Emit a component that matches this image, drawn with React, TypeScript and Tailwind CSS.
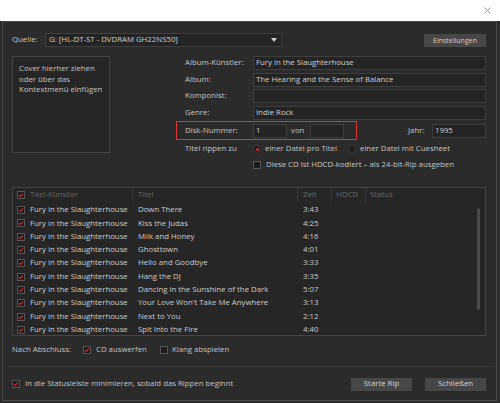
import React from 'react';

const tracks = [
  { title: 'Down There', time: '3:43' },
  { title: 'Kiss the Judas', time: '4:25' },
  { title: 'Milk and Honey', time: '4:16' },
  { title: 'Ghosttown', time: '4:01' },
  { title: 'Hello and Goodbye', time: '3:33' },
  { title: 'Hang the DJ', time: '3:35' },
  { title: 'Dancing in the Sunshine of the Dark', time: '5:07' },
  { title: "Your Love Won't Take Me Anywhere", time: '3:13' },
  { title: 'Next to You', time: '2:12' },
  { title: 'Spit Into the Fire', time: '4:40' },
];

function Check({ on = true }: { on?: boolean }) {
  return (
    <span className="w-[8px] h-[8px] shrink-0 border border-[#555] bg-[#1c1c1c] flex items-center justify-center">
      {on && (
        <svg width="8" height="8" viewBox="0 0 8 8" className="block">
          <path d="M1.3 4.1 L3.1 5.9 L6.6 1.9" fill="none" stroke="#e0262b" strokeWidth="1.4" />
        </svg>
      )}
    </span>
  );
}

function Radio({ on = false }: { on?: boolean }) {
  return (
    <span className="w-[8px] h-[8px] shrink-0 rounded-full bg-[#1a1a1a] border border-[#3a3a3a] flex items-center justify-center">
      {on && <span className="w-[3px] h-[3px] rounded-full bg-[#e0262b]" />}
    </span>
  );
}

function Field({ value = '', className = '' }: { value?: string; className?: string }) {
  return (
    <div className={`h-[14px] bg-[#242424] border border-[#3e3e3e] pl-[2px] flex items-center text-[#cfcfcf] whitespace-nowrap overflow-hidden ${className}`}>
      {value}
    </div>
  );
}

function Button({ label }: { label: string }) {
  return (
    <div className="w-[61px] h-[13px] bg-[#474747] flex items-center justify-center text-[#d6d6d6]">
      {label}
    </div>
  );
}

export default function App() {
  return (
    <div
      className="w-[500px] h-[403px] flex flex-col bg-[#2b2b2b] text-[7.8px] leading-none text-[#c4c4c4] overflow-hidden"
      style={{ fontFamily: '"Open Sans", "Noto Sans", sans-serif' }}
    >
      {/* title strip */}
      <div className="h-[21px] bg-white flex justify-end items-center pr-[9px] shrink-0">
        <svg width="7" height="7" viewBox="0 0 7 7">
          <path d="M0.5 0.5 L6.5 6.5 M6.5 0.5 L0.5 6.5" stroke="#8a8a8a" strokeWidth="0.9" />
        </svg>
      </div>

      <div className="flex-1 pl-[2px] pr-[3px] pb-[2px]">
        <div className="h-full border border-[#4b4b4b] pl-[9px] pr-[10px] flex flex-col">
          {/* source row */}
          <div className="mt-[10px] h-[16px] flex items-center">
            <span className="w-[33px]">Quelle:</span>
            <div className="w-[237px] h-[14px] bg-[#242424] border border-[#3e3e3e] pl-[3px] pr-[4px] flex items-center justify-between text-[#cfcfcf]">
              <span>G: [HL-DT-ST - DVDRAM GH22NS50]</span>
              <svg width="6" height="4" viewBox="0 0 6 4">
                <path d="M0 0 H6 L3 4 Z" fill="#d0d0d0" />
              </svg>
            </div>
            <div className="ml-auto">
              <div className="w-[62px] h-[13px] bg-[#474747] flex items-center justify-center text-[#d0d0d0] text-[7px]">
                Einstellungen
              </div>
            </div>
          </div>

          {/* cover + metadata */}
          <div className="mt-[8px] h-[116px] flex">
            <div className="w-[98px] h-[97px] border border-[#444] bg-[#262626] pl-[6px] pt-[6px] leading-[10.7px] text-[#c4c4c4]">
              Cover hierher ziehen
              <br />
              oder über das
              <br />
              Kontextmenü einfügen
            </div>

            <div className="ml-[66px] flex-1 flex flex-col">
              <div className="flex flex-col gap-[2.5px]">
                {[
                  ['Album-Künstler:', 'Fury in the Slaughterhouse'],
                  ['Album:', 'The Hearing and the Sense of Balance'],
                  ['Komponist:', ''],
                  ['Genre:', 'Indie Rock'],
                ].map(([label, value]) => (
                  <div key={label} className="flex items-center">
                    <span className="w-[77px] pl-[9px]">{label}</span>
                    <Field value={value} className="flex-1" />
                  </div>
                ))}
              </div>

              <div className="mt-[1.5px] flex items-center">
                <div className="w-[181px] h-[19px] border border-[#dc3a30] flex items-center">
                  <span className="w-[76px] pl-[8px]">Disk-Nummer:</span>
                  <Field value="1" className="w-[34px]" />
                  <span className="w-[23px] pl-[4px]">von</span>
                  <Field className="w-[34px]" />
                </div>
                <span className="ml-auto w-[24px]">Jahr:</span>
                <Field value="1995" className="w-[54px]" />
              </div>

              <div className="mt-[2.5px] h-[13px] flex items-center">
                <span className="w-[77px] pl-[9px]">Titel rippen zu</span>
                <div className="w-[95px] flex items-center gap-[4px]">
                  <Radio on />
                  <span>einer Datei pro Titel</span>
                </div>
                <div className="flex items-center gap-[4px]">
                  <Radio />
                  <span>einer Datei mit Cuesheet</span>
                </div>
              </div>

              <div className="mt-[3px] h-[13px] flex items-center pl-[77px] gap-[5px]">
                <Check on={false} />
                <span>Diese CD ist HDCD-kodiert – als 24-bit-Rip ausgeben</span>
              </div>
            </div>
          </div>

          {/* track list */}
          <div className="relative mt-[15px] h-[149px] border border-[#454545] bg-[#262626]">
            <div className="h-[13px] flex items-center text-[#666]">
              <div className="w-[17px] pl-[4px]">
                <Check />
              </div>
              <div className="w-[103px] h-full flex items-center border-r border-[#3a3a3a]">Titel-Künstler</div>
              <div className="w-[165px] h-full flex items-center pl-[5px] border-r border-[#3a3a3a]">Titel</div>
              <div className="w-[34px] h-full flex items-center pl-[5px] border-r border-[#3a3a3a]">Zeit</div>
              <div className="w-[34px] h-full flex items-center pl-[4px] border-r border-[#3a3a3a]">HDCD</div>
              <div className="pl-[4px]">Status</div>
            </div>
            <div className="pt-[2.5px]">
              {tracks.map((t) => (
                <div key={t.title} className="h-[13.3px] flex items-center text-[#cdcdcd] whitespace-nowrap">
                  <div className="w-[17px] pl-[4px]">
                    <Check />
                  </div>
                  <div className="w-[103px]">Fury in the Slaughterhouse</div>
                  <div className="w-[165px] pl-[5px]">{t.title}</div>
                  <div className="pl-[5px]">{t.time}</div>
                </div>
              ))}
            </div>
            <div className="absolute right-[5px] top-[20px] w-[3px] h-[102px] rounded-full bg-[#4a4a4a]" />
          </div>

          {/* after rip */}
          <div className="mt-[8px] h-[12px] flex items-center">
            <span className="w-[71px]">Nach Abschluss:</span>
            <div className="w-[77px] flex items-center gap-[5px]">
              <Check />
              <span>CD auswerfen</span>
            </div>
            <div className="flex items-center gap-[4px]">
              <Check on={false} />
              <span>Klang abspielen</span>
            </div>
          </div>

          <div className="mt-[9.5px] h-px bg-[#3a3a3a] ml-[-4px] mr-[-5px]" />

          <div className="mt-[11px] h-[13px] flex items-center">
            <Check />
            <span className="ml-[5px]">In die Statusleiste minimieren, sobald das Rippen beginnt</span>
            <div className="ml-auto flex gap-[13px]">
              <Button label="Starte Rip" />
              <Button label="Schließen" />
            </div>
          </div>
        </div>
      </div>
    </div>
  );
}
